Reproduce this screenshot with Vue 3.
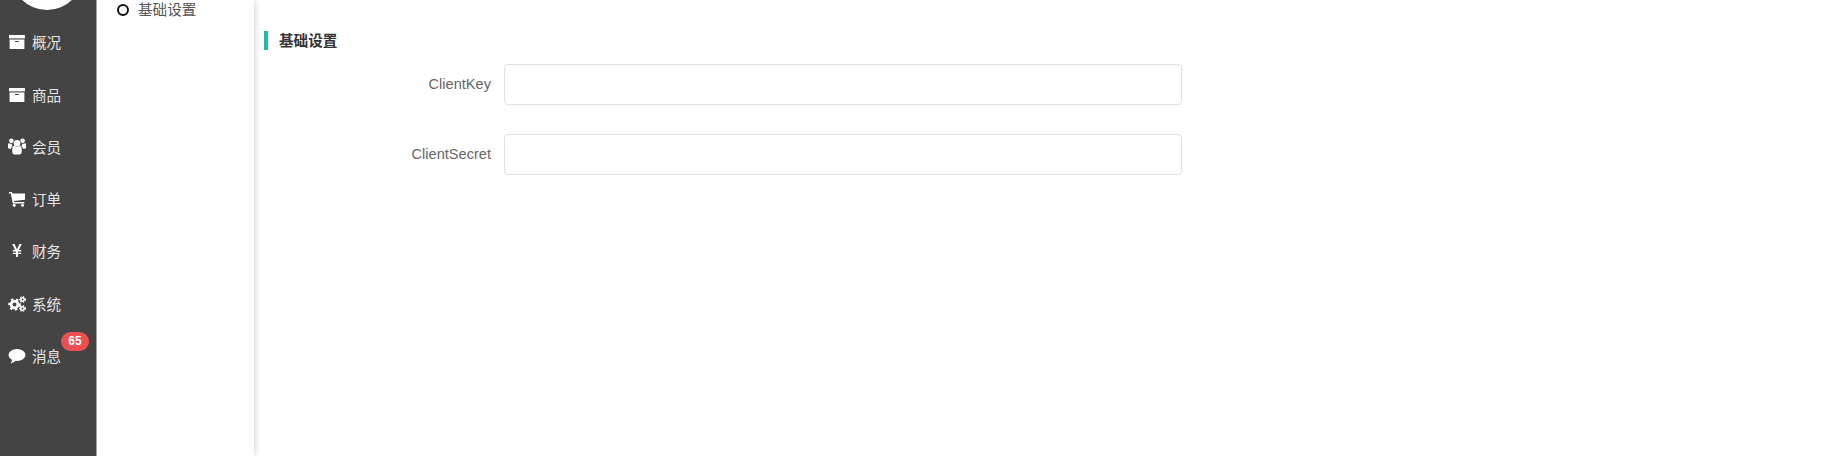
<template>
  <div class="shell">
    <aside class="sidebar">
      <div class="avatar"></div>
      <ul class="menu">
        <li v-for="item in menu" :key="item.label" class="menu-item">
          <span class="menu-icon">
            <svg v-if="item.icon === 'archive'" viewBox="0 0 16 16" width="16" height="16">
              <path d="M0 1h16v3.4H0z" />
              <path fill-rule="evenodd" d="M.6 5.4h14.8v9.1a.6.6 0 0 1-.6.6H1.200a.6.6 0 0 1-.6-.6zM6 7v1h4V7z" />
            </svg>
            <svg v-else-if="item.icon === 'users'" viewBox="0 0 18 17" width="18" height="17">
              <circle cx="9" cy="5.200" r="3.300" />
              <circle cx="3.400" cy="2.800" r="2.300" />
              <circle cx="14.600" cy="2.800" r="2.300" />
              <path d="M4.300 10.500c0-1.800 1-2.700 2.200-2.700.7.600 1.500.9 2.500.9s1.800-.3 2.500-.9c1.200 0 2.200.9 2.200 2.700v3.500c0 1.500-1 2.500-2.200 2.500h-5c-1.200 0-2.200-1-2.200-2.500z" />
              <path d="M0 6.500c0-.8.400-1.300 1.200-1.300.6.500 1.500.8 2.600.6-.1 1 .3 1.800 1 2.300-1 .5-1.600 1.400-1.800 2.700H1.200C.5 10.800 0 10.300 0 9.600z" />
              <path d="M18 6.500c0-.8-.4-1.300-1.200-1.300-.6.500-1.500.8-2.600.6.100 1-.3 1.800-1 2.300 1 .5 1.600 1.400 1.800 2.700h1.800c.7 0 1.200-.5 1.200-1.200z" />
            </svg>
            <svg v-else-if="item.icon === 'cart'" viewBox="0 0 16 16" width="16" height="16">
              <path d="M0 1h2.800l.5 1.600H16v6.200L4.900 10l.3 1h10.100v1.400H3.800L1.800 2.400H0z" />
              <circle cx="5.200" cy="14.200" r="1.500" />
              <circle cx="13.500" cy="14.200" r="1.500" />
            </svg>
            <svg v-else-if="item.icon === 'yen'" viewBox="0 0 16 16" width="16" height="16">
              <path d="M3.200 1h2.300L8 6.300 10.500 1h2.300L9.900 7h2.300v1.400H9v1.300h3.200v1.400H9V14H7v-2.900H3.800V9.700H7V8.400H3.800V7h2.300z" />
            </svg>
            <svg v-else-if="item.icon === 'cogs'" viewBox="0 0 18 16" width="18" height="16">
              <circle cx="6.500" cy="8.500" r="3.400" fill="none" stroke="#fff" stroke-width="2.800" />
              <circle cx="6.500" cy="8.500" r="5.400" fill="none" stroke="#fff" stroke-width="1.800" stroke-dasharray="2.400 2.900" />
              <circle cx="14.500" cy="3.500" r="1.700" fill="none" stroke="#fff" stroke-width="1.600" />
              <circle cx="14.500" cy="3.500" r="2.900" fill="none" stroke="#fff" stroke-width="1.100" stroke-dasharray="1.300 1.430" />
              <circle cx="14.500" cy="12.500" r="1.700" fill="none" stroke="#fff" stroke-width="1.600" />
              <circle cx="14.500" cy="12.500" r="2.900" fill="none" stroke="#fff" stroke-width="1.100" stroke-dasharray="1.300 1.430" />
            </svg>
            <svg v-else viewBox="0 0 18 16" width="18" height="16">
              <ellipse cx="9" cy="7" rx="8.500" ry="6" />
              <path d="M4 11l-.2 2.500-1.500 1.700c1.900-.1 4-1 5.600-2.500z" />
            </svg>
          </span>
          <span class="menu-label">{{ item.label }}</span>
          <span v-if="item.badge" class="badge">{{ item.badge }}</span>
        </li>
      </ul>
    </aside>

    <nav class="subnav">
      <div class="subnav-item">
        <span class="ring"></span>
        <span>基础设置</span>
      </div>
    </nav>

    <main class="content">
      <h3 class="section-title">基础设置</h3>
      <form class="form" @submit.prevent>
        <div v-for="field in fields" :key="field" class="form-row">
          <label class="form-label">{{ field }}</label>
          <input class="form-input" type="text" />
        </div>
      </form>
    </main>
  </div>
</template>

<script setup>
const menu = [
  { label: '概况', icon: 'archive' },
  { label: '商品', icon: 'archive' },
  { label: '会员', icon: 'users' },
  { label: '订单', icon: 'cart' },
  { label: '财务', icon: 'yen' },
  { label: '系统', icon: 'cogs' },
  { label: '消息', icon: 'comment', badge: 65 }
]

const fields = ['ClientKey', 'ClientSecret']
</script>

<style>
html,
body {
  margin: 0;
  overflow: hidden;
  background: #fff;
}
</style>

<style scoped>
.shell {
  display: flex;
  height: 456px;
  overflow: hidden;
  font-family: "Liberation Sans", "Noto Sans CJK SC", sans-serif;
  font-size: 14.6px;
}
.sidebar {
  width: 96px;
  flex-shrink: 0;
  background: #444;
  border-right: 1px solid #a8a8a8;
  overflow: hidden;
}
.avatar {
  width: 72px;
  height: 72px;
  margin: -62.5px 0 6.6px 11px;
  border-radius: 50%;
  background: #fff;
}
.menu {
  list-style: none;
  margin: 0;
  padding: 0;
}
.menu-item {
  position: relative;
  display: flex;
  align-items: center;
  height: 52.3px;
  color: #e4e4e4;
}
.menu-icon {
  display: flex;
  justify-content: center;
  width: 34px;
  margin-right: -2px;
}
.menu-icon svg {
  fill: #fff;
}
.menu-label {
  margin-top: -1px;
}
.badge {
  position: absolute;
  top: 2px;
  left: 61px;
  width: 28px;
  height: 19px;
  border-radius: 10px;
  background: #ed5050;
  color: #fff;
  font-size: 12px;
  font-weight: bold;
  line-height: 19px;
  text-align: center;
}
.subnav {
  width: 157px;
  flex-shrink: 0;
  background: #fff;
  box-shadow: 2px 0 5px rgba(0, 0, 0, 0.14);
}
.subnav-item {
  display: flex;
  align-items: center;
  gap: 9px;
  height: 17px;
  padding-left: 20px;
  color: #555;
}
.ring {
  width: 8px;
  height: 8px;
  border: 2.5px solid #111;
  border-radius: 50%;
  margin-top: 2px;
}
.content {
  flex: 1;
  padding: 31px 0 0 10px;
}
.section-title {
  margin: 0 0 14px;
  height: 19px;
  padding-left: 11px;
  border-left: 4px solid #1fbba6;
  color: #333;
  font-size: 14.6px;
  line-height: 20px;
}
.form-row {
  display: flex;
  align-items: center;
  gap: 13px;
  margin-bottom: 29px;
}
.form-label {
  width: 227px;
  padding-bottom: 1px;
  color: #666;
  text-align: right;
}
.form-input {
  box-sizing: border-box;
  width: 678px;
  height: 41px;
  padding: 0 10px;
  border: 1px solid #e0e0e6;
  border-radius: 4px;
  background: #fff;
  outline: none;
}
</style>
